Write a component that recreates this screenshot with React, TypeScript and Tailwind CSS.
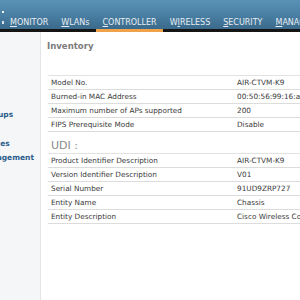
import React from "react";

type Row = { label: string; value: string };

const inventory: Row[] = [
  { label: "Model No.", value: "AIR-CTVM-K9" },
  { label: "Burned-in MAC Address", value: "00:50:56:99:16:a8" },
  { label: "Maximum number of APs supported", value: "200" },
  { label: "FIPS Prerequisite Mode", value: "Disable" },
];

const udi: Row[] = [
  { label: "Product Identifier Description", value: "AIR-CTVM-K9" },
  { label: "Version Identifier Description", value: "V01" },
  { label: "Serial Number", value: "91UD9ZRP727" },
  { label: "Entity Name", value: "Chassis" },
  { label: "Entity Description", value: "Cisco Wireless Controller" },
];

const nav = [
  { pre: "", key: "M", post: "ONITOR" },
  { pre: "", key: "W", post: "LANs" },
  { pre: "", key: "C", post: "ONTROLLER", active: true },
  { pre: "W", key: "I", post: "RELESS" },
  { pre: "", key: "S", post: "ECURITY" },
  { pre: "", key: "M", post: "ANAGEMENT" },
];

const menu = [
  "General",
  "Inventory",
  "Interfaces",
  "Interface Groups",
  "Multicast",
  "Network Routes",
  "Mobility Management",
  "Ports",
  "NTP",
  "CDP",
];

function InfoTable({ rows }: { rows: Row[] }) {
  return (
    <div className="ml-[7px] w-[300px] border-t border-[#e2e2e2]">
      {rows.map((r) => (
        <div
          key={r.label}
          className="flex h-[14px] items-center border-b border-[#dcdcdc] text-[7.3px] leading-[13px] text-[#3a3a3a] whitespace-nowrap"
        >
          <div className="w-[189px] pl-[3px]">{r.label}</div>
          <div>{r.value}</div>
        </div>
      ))}
    </div>
  );
}

export default function App() {
  return (
    <div className="w-[300px] h-[300px] overflow-hidden bg-white font-['DejaVu_Sans',sans-serif]">
      {/* top bar */}
      <div className="flex h-[32px] border-b-[3px] border-[#151515] bg-gradient-to-b from-[#5a92b6] via-[#4a80a4] to-[#3a6a8b]">
        <div className="flex w-[41px] flex-col gap-[8px] pt-[11px] pl-[2px]">
          <span className="h-[2px] w-[2px] bg-white/90" />
          <span className="h-[3px] w-[2px] bg-white/80" />
        </div>
        <div className="flex items-stretch gap-[1px] whitespace-nowrap">
          {nav.map((n) => (
            <div
              key={n.key + n.post}
              className={`flex items-end px-[6px] pb-[1px] -mb-[3px] border-b-[3px] text-[8px] leading-[10px] text-[#e8eef3] ${
                n.active ? "border-[#f0a24a]" : "border-[#151515]"
              }`}
            >
              {n.pre}
              <span className="underline">{n.key}</span>
              {n.post}
            </div>
          ))}
        </div>
      </div>

      <div className="flex h-[268px]">
        {/* side menu, scrolled to the left */}
        <div className="w-[41px] shrink-0 overflow-hidden border-r border-[#e3e5e8] bg-[#f5f6f8]">
          <div className="-ml-[58px] flex flex-col pt-[32px]">
            {menu.map((m) => (
              <div
                key={m}
                className="h-[14.5px] whitespace-nowrap text-[7.5px] font-bold leading-[14.5px] text-[#2b5d8c]"
              >
                {m}
              </div>
            ))}
          </div>
        </div>

        {/* content */}
        <div className="flex-1 overflow-hidden">
          <div className="pl-[6px] pt-[8px] font-['DejaVu_Sans_Condensed','DejaVu_Sans',sans-serif] text-[9.5px] font-bold leading-[12px] text-[#7c7c7c]">
            Inventory
          </div>
          <div className="mt-[23px]">
            <InfoTable rows={inventory} />
          </div>
          <div className="mt-[7px] pl-[10px] text-[11px] leading-[14px] text-[#8a8a8a]">
            UDI :
          </div>
          <InfoTable rows={udi} />
        </div>
      </div>
    </div>
  );
}
